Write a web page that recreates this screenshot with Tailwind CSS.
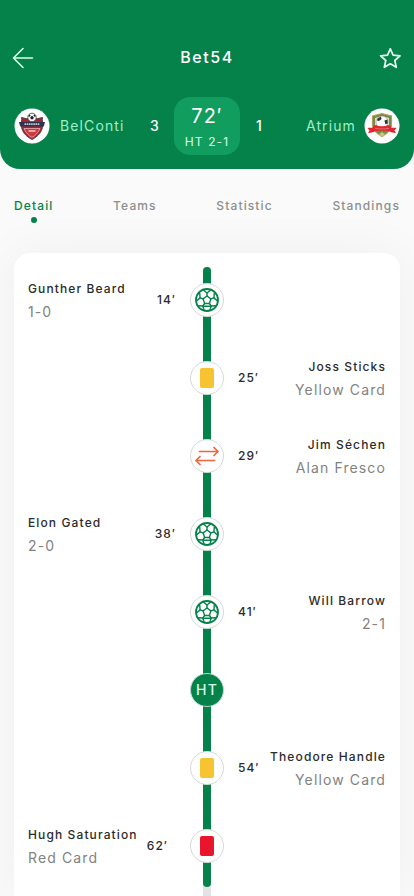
<!DOCTYPE html>
<html lang="en">

<head>
    <meta charset="UTF-8">
    <meta name="viewport" content="width=device-width, initial-scale=1.0">
    <title>Bet54</title>
    <script src="https://cdn.jsdelivr.net/npm/@tailwindcss/browser@4"></script>
</head>

<body class="min-h-screen flex flex-col bg-[#fafafa] font-['Inter',sans-serif] text-[#2b2b2b] tracking-[0.07em]">
    <!-- Shared icons -->
    <svg class="hidden" aria-hidden="true">
        <symbol id="ball" viewBox="0 0 24 24">
            <g fill="none" stroke="currentColor" stroke-width="1.4" stroke-linejoin="round" stroke-linecap="round">
                <circle cx="12" cy="12" r="11" stroke-width="1.8" />
                <path d="M12 8l3.900 2.900-1.500 4.600H9.600L8.100 10.900z" />
                <path d="M12 8V5M15.900 10.900l3-1M14.400 15.500l1.800 2.500M9.600 15.500L7.800 18M8.100 10.900l-3-1" />
                <path d="M12 5L8.600 2.200M12 5l3.400-2.800M5.100 9.900L4.700 5M5.100 9.900L1.500 13M18.900 9.900l.4-4.900M18.900 9.900l3.600 3.100M7.800 18l-4.300-.2M7.800 18l1.200 4.200M16.200 18l4.300-.2M16.200 18L15 22.200M7.800 18.200h8.400" />
            </g>
        </symbol>
    </svg>

    <header class="rounded-b-[20px] bg-[#05824a] px-3 pt-[45px] pb-[14px] text-white">
        <div class="flex items-center justify-between">
            <button type="button" aria-label="Back">
                <svg class="size-6" viewBox="0 0 24 24" fill="none" stroke="#d6ffea" stroke-width="1.6" stroke-linecap="round" stroke-linejoin="round">
                    <path d="M20.500 13H1.500M11 3.500L1.500 13l9.500 9.500" />
                </svg>
            </button>
            <h1 class="text-base font-medium tracking-widest">Bet54</h1>
            <button type="button" aria-label="Add to favourites">
                <svg class="size-6" viewBox="0 0 24 24" fill="none" stroke="#e4fff2" stroke-width="1.700" stroke-linejoin="round">
                    <path d="M12.300 3.800l2.800 6.400 6.900.7-5.200 4.600 1.500 6.800-6-3.500-6 3.500 1.500-6.800-5.200-4.600 6.900-.7z" />
                </svg>
            </button>
        </div>

        <!-- Score -->
        <div class="mt-7 grid grid-cols-[1fr_66px_1fr] items-center text-sm">
            <div class="flex items-center pl-0.5 pr-[14px]">
                <svg class="size-9 shrink-0" viewBox="0 0 36 36" role="img" aria-label="BelConti logo">
                    <circle cx="18" cy="18" r="17.500" fill="#fff" />
                    <path d="M18 9l4 2 6.500-1.500c-.5 3 0 4.500.8 5.500l-1.300 6c-1.500 4.500-4.500 7.500-10 10.500-5.500-3-8.500-6-10-10.500l-1.300-6c.8-1 1.300-2.500.8-5.500L14 11z" fill="#a8242d" stroke="#4b4350" stroke-width="1" />
                    <path d="M10 20.500h16c-1.500 4-4.500 7-8 9-3.500-2-6.500-5-8-9z" fill="#cf3a42" stroke="#efc0c0" stroke-width=".7" />
                    <path d="M5 14h26l-1.200 4.500H6.200z" fill="#2d3350" />
                    <path d="M10.500 16.200h15" stroke="#c3c7d6" stroke-width="1.800" stroke-dasharray="1.600 .6" />
                    <path d="M14.500 23h7" stroke="#fff" stroke-width="1.100" />
                    <circle cx="18" cy="9.500" r="4.300" fill="#f5f5f5" stroke="#222" stroke-width=".7" />
                    <path d="M18 7.800l1.800 1.400-.7 2.100h-2.200l-.7-2.100zM14.200 8l1.400-1.600 1 .8-1.400 1.800zM21.800 8l-1.400-1.600-1 .8 1.400 1.800z" fill="#222" />
                </svg>
                <span class="ml-2.5 text-[#9ff0c8]">BelConti</span>
                <span class="ml-auto font-medium">3</span>
            </div>
            <div class="flex h-[58px] flex-col items-center justify-center rounded-2xl bg-[#109d5d] pt-1">
                <span class="text-xl leading-7">72′</span>
                <span class="text-xs leading-6 text-[#d6ffea]">HT 2-1</span>
            </div>
            <div class="flex items-center pl-4 pr-0.5">
                <span class="font-medium">1</span>
                <span class="ml-auto mr-2 text-[#9ff0c8]">Atrium</span>
                <svg class="size-9 shrink-0" viewBox="0 0 36 36" role="img" aria-label="Atrium logo">
                    <circle cx="18" cy="18" r="17.500" fill="#fff" />
                    <path d="M18 5.500l9.500 2.500v9c0 5-4 8.500-9.500 11.500-5.500-3-9.500-6.500-9.500-11.500V8z" fill="#708c45" stroke="#b99c5a" stroke-width="1.200" />
                    <path d="M18 8l7 2v7H11v-7z" fill="#dfe3cd" />
                    <circle cx="18" cy="14" r="6" fill="#fafafa" stroke="#777" stroke-width=".4" />
                    <path d="M13.500 10.500l3.500-2 .5 2.500-2.500 2-2-.5zM20.500 12.500l3-1 .3 4-2.500.8z" fill="#333" />
                    <path d="M3.500 20c2-.5 3.500-.5 5 0l1-2.500c6 1 11 1 17 0l1 2.500c1.500-.5 3-.5 5 0l-2 2.500 1.500 2.500c-3-.5-5-.5-6.500-1.500-5-1.500-10-1.500-15 0C9 24.500 7 24.500 4 25l1.500-2.500z" fill="#e2262f" />
                    <path d="M11 20.500c5 .6 9 .6 14 0" fill="none" stroke="#f08a8a" stroke-width=".7" />
                    <path d="M18 23.500l1 1.800 2 .2-1.500 1.300.4 1.700-1.900-.9-1.900.9.4-1.700-1.500-1.300 2-.2z" fill="#c9cf94" />
                </svg>
            </div>
        </div>
    </header>

    <nav class="flex items-start justify-between px-[14px] pt-7 pb-[30px] text-xs leading-[18px] font-medium text-[#8b8f8d]">
        <a href="#detail" class="flex flex-col items-center gap-0.5 text-[#05824a]" aria-current="page">
            Detail
            <span class="size-1.5 rounded-full bg-[#05824a]"></span>
        </a>
        <a href="#teams">Teams</a>
        <a href="#statistic">Statistic</a>
        <a href="#standings">Standings</a>
    </nav>

    <main id="detail" class="relative mx-[14px] flex-1 rounded-t-2xl bg-white px-[14px] pt-2 pb-[11px] shadow-[0_0_50px_rgba(0,0,0,0.05)]">
        <!-- Match progress -->
        <div class="absolute top-[14px] bottom-0 left-1/2 w-2 -translate-x-1/2 rounded-t-full bg-[#e3e3e3]">
            <div class="absolute inset-x-0 top-0 bottom-[9px] rounded-full bg-[#05824a]"></div>
        </div>

        <ol class="relative text-xs font-medium">
            <li class="grid h-[78px] grid-cols-[1fr_34px_1fr] items-center">
                <div class="flex items-center justify-between">
                    <div class="leading-6 whitespace-nowrap">
                        <p>Gunther Beard</p>
                        <p class="text-sm leading-[22px] font-normal text-[#7f8381]">1-0</p>
                    </div>
                    <time class="mr-[14px]">14′</time>
                </div>
                <span class="flex size-[34px] items-center justify-center rounded-full border border-[#d5dad8] bg-white text-[#05824a]">
                    <svg class="size-6" role="img" aria-label="Goal"><use href="#ball" /></svg>
                </span>
            </li>
            <li class="grid h-[78px] grid-cols-[1fr_34px_1fr] items-center">
                <span class="col-start-2 flex size-[34px] items-center justify-center rounded-full border border-[#d5dad8] bg-white">
                    <span class="h-5 w-[14px] rounded-xs bg-[#f7c331]"></span>
                </span>
                <div class="flex items-center justify-between">
                    <time class="ml-[14px]">25′</time>
                    <div class="text-right leading-6 whitespace-nowrap">
                        <p>Joss Sticks</p>
                        <p class="text-sm leading-[22px] font-normal text-[#7f8381]">Yellow Card</p>
                    </div>
                </div>
            </li>
            <li class="grid h-[78px] grid-cols-[1fr_34px_1fr] items-center">
                <span class="col-start-2 flex size-[34px] items-center justify-center rounded-full border border-[#d5dad8] bg-white">
                    <svg class="size-6" viewBox="0 0 24 24" fill="none" stroke="#ee6541" stroke-width="1.700" stroke-linecap="round" stroke-linejoin="round" role="img" aria-label="Substitution">
                        <path d="M4.500 7.500H23M19 3.500l4 4-4 4M19.500 16.500H1M5 12.500l-4 4 4 4" />
                    </svg>
                </span>
                <div class="flex items-center justify-between">
                    <time class="ml-[14px]">29′</time>
                    <div class="text-right leading-6 whitespace-nowrap">
                        <p>Jim Séchen</p>
                        <p class="text-sm leading-[22px] font-normal text-[#7f8381]">Alan Fresco</p>
                    </div>
                </div>
            </li>
            <li class="grid h-[78px] grid-cols-[1fr_34px_1fr] items-center">
                <div class="flex items-center justify-between">
                    <div class="leading-6 whitespace-nowrap">
                        <p>Elon Gated</p>
                        <p class="text-sm leading-[22px] font-normal text-[#7f8381]">2-0</p>
                    </div>
                    <time class="mr-[14px]">38′</time>
                </div>
                <span class="flex size-[34px] items-center justify-center rounded-full border border-[#d5dad8] bg-white text-[#05824a]">
                    <svg class="size-6" role="img" aria-label="Goal"><use href="#ball" /></svg>
                </span>
            </li>
            <li class="grid h-[78px] grid-cols-[1fr_34px_1fr] items-center">
                <span class="col-start-2 flex size-[34px] items-center justify-center rounded-full border border-[#d5dad8] bg-white text-[#05824a]">
                    <svg class="size-6" role="img" aria-label="Goal"><use href="#ball" /></svg>
                </span>
                <div class="flex items-center justify-between">
                    <time class="ml-[14px]">41′</time>
                    <div class="text-right leading-6 whitespace-nowrap">
                        <p>Will Barrow</p>
                        <p class="text-sm leading-[22px] font-normal text-[#7f8381]">2-1</p>
                    </div>
                </div>
            </li>
            <li class="grid h-[78px] grid-cols-[1fr_34px_1fr] items-center">
                <span class="col-start-2 flex size-[34px] items-center justify-center rounded-full border border-[#b5d8c8] bg-[#05824a] text-sm text-[#d6ffea]">HT</span>
            </li>
            <li class="grid h-[78px] grid-cols-[1fr_34px_1fr] items-center">
                <span class="col-start-2 flex size-[34px] items-center justify-center rounded-full border border-[#d5dad8] bg-white">
                    <span class="h-5 w-[14px] rounded-xs bg-[#f7c331]"></span>
                </span>
                <div class="flex items-center justify-between">
                    <time class="ml-[14px]">54′</time>
                    <div class="text-right leading-6 whitespace-nowrap">
                        <p>Theodore Handle</p>
                        <p class="text-sm leading-[22px] font-normal text-[#7f8381]">Yellow Card</p>
                    </div>
                </div>
            </li>
            <li class="grid h-[78px] grid-cols-[1fr_34px_1fr] items-center">
                <div class="flex items-center justify-between">
                    <div class="leading-6 whitespace-nowrap">
                        <p>Hugh Saturation</p>
                        <p class="text-sm leading-[22px] font-normal text-[#7f8381]">Red Card</p>
                    </div>
                    <time class="mr-[22px]">62′</time>
                </div>
                <span class="flex size-[34px] items-center justify-center rounded-full border border-[#d5dad8] bg-white">
                    <span class="h-5 w-[14px] rounded-xs bg-[#e8152d]"></span>
                </span>
            </li>
        </ol>
    </main>
</body>

</html>
